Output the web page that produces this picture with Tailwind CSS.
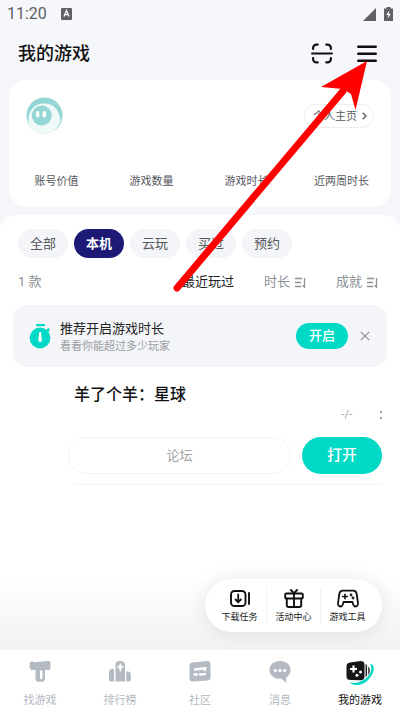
<!DOCTYPE html>
<html lang="zh-CN">
<head>
<meta charset="utf-8">
<meta name="viewport" content="width=device-width, initial-scale=1">
<title>我的游戏</title>
<script src="https://cdn.jsdelivr.net/npm/@tailwindcss/browser@4"></script>
</head>
<body class="relative flex min-h-screen flex-col bg-[#f6f7fa] font-['Roboto','Noto_Sans_CJK_SC',sans-serif] text-[#111]">
  <!-- Status bar -->
  <div class="flex h-7 items-center pl-[7px] pr-[7px] text-[#606164]">
    <span class="text-base leading-7">11:20</span>
    <svg class="ml-[14px]" width="11" height="12" viewBox="0 0 11 12" aria-hidden="true"><rect width="11" height="12" rx="1" fill="#606164"/><path d="M3 8.500 5.500 2.500 8 8.500M4 6.700h3" fill="none" stroke="#fff" stroke-width="1.300"/></svg>
    <svg class="ml-auto" width="13" height="13" viewBox="0 0 13 13" aria-hidden="true"><path d="M13 0v13H0z" fill="#606164"/></svg>
    <svg class="ml-2" width="9" height="14" viewBox="0 0 9 14" aria-hidden="true"><path d="M2.500 0h4v1.500H9V14H0V1.500h2.500z" fill="#606164"/><path d="M5.300 3.500 2.200 8h2l-.6 3.500L6.800 7h-2z" fill="#fff"/></svg>
  </div>

  <!-- Title bar -->
  <header class="flex h-[52px] items-center pl-[18px] pr-[22px]">
    <h1 class="text-lg font-medium">我的游戏</h1>
    <button class="ml-auto" aria-label="扫一扫">
      <svg width="22" height="22" viewBox="0 0 22 22" fill="none" stroke="#111" stroke-width="2.200" stroke-linecap="round"><path d="M1.100 10.500h19.800M2.100 6V5a3.400 3.400 0 0 1 3.400-3.400h1.200M15.300 1.600h1.200A3.400 3.400 0 0 1 19.900 5v1M2.100 15v1a3.400 3.400 0 0 0 3.400 3.400h1.200M15.300 19.400h1.200a3.400 3.400 0 0 0 3.400-3.400v-1"/></svg>
    </button>
    <button class="ml-[23px]" aria-label="菜单">
      <svg width="22" height="18" viewBox="0 0 22 18" fill="none" stroke="#111" stroke-width="2.600" stroke-linecap="round"><path d="M2.300 1.700h17.400M2.300 8.700h17.400M2.300 15.700h17.400"/></svg>
    </button>
  </header>

  <!-- Profile card -->
  <section class="mx-[9px] mb-2 rounded-[18px] bg-white pb-4 pt-[17px]">
    <div class="flex items-center justify-between px-[17px]">
      <svg width="37" height="37" viewBox="0 0 37 37" role="img" aria-label="头像">
        <circle cx="18.500" cy="18.500" r="18" fill="#94d6d6"/>
        <path d="M3.500 29C0 19 5 7.500 17 6.500c10-.5 16.500 6 17.500 17.500C32 32 26 36.500 18.500 36.500 12 36.500 7 33 3.500 29z" fill="#eff9f8"/>
        <circle cx="15.800" cy="18.500" r="10" fill="#94d6d6"/>
        <rect x="10" y="14" width="3.400" height="6.500" rx="1.700" fill="#fff"/><rect x="16.600" y="14" width="3.400" height="6.500" rx="1.700" fill="#fff"/>
      </svg>
      <button class="flex h-6 items-center gap-[5px] rounded-full border border-[#eceef0] pl-2 pr-[6px] text-[11px] leading-4 text-[#55585d]"><span class="pt-[2px]">个人主页</span>
        <svg width="5" height="8" viewBox="0 0 5 8" fill="none" stroke="#55585d" stroke-width="1.300" aria-hidden="true"><path d="M.7.700 4 4 .7 7.300"/></svg>
      </button>
    </div>
    <ul class="mt-[39px] grid grid-cols-4 pr-[2px] text-center text-[11px] leading-[18px] text-[#55585d]">
      <li>账号价值</li><li>游戏数量</li><li>游戏时长</li><li>近两周时长</li>
    </ul>
  </section>

  <!-- Game list -->
  <main class="relative flex flex-1 flex-col rounded-t-[16px] bg-white pt-[14px]">
    <div class="flex gap-[6px] px-[18px] text-[13px] text-[#55585d]">
      <button class="h-[29px] rounded-full bg-[#f4f5f8] px-3">全部</button>
      <button class="h-[29px] rounded-full bg-[#1c1a75] px-3 font-bold text-white">本机</button>
      <button class="h-[29px] rounded-full bg-[#f4f5f8] px-3">云玩</button>
      <button class="h-[29px] rounded-full bg-[#f4f5f8] px-3">买过</button>
      <button class="h-[29px] rounded-full bg-[#f4f5f8] px-3">预约</button>
    </div>

    <div class="mt-[13px] flex h-[22px] items-center pl-[18px] pr-[22px] text-[13px] text-[#8c9097]">
      <span>1 款</span>
      <button class="ml-auto text-[#222]">最近玩过</button>
      <button class="ml-[30px] flex items-center gap-1">时长
        <svg width="12" height="11" viewBox="0 0 12 11" fill="none" stroke="#8c9097" stroke-width="1.300" aria-hidden="true"><path d="M1 1.500h7M1 5.500h6M1 9.500h6M10.500 1v9L8.500 8.200"/></svg>
      </button>
      <button class="ml-[30px] flex items-center gap-1">成就
        <svg width="12" height="11" viewBox="0 0 12 11" fill="none" stroke="#8c9097" stroke-width="1.300" aria-hidden="true"><path d="M1 1.500h7M1 5.500h6M1 9.500h6M10.500 1v9L8.500 8.200"/></svg>
      </button>
    </div>

    <section class="mx-[13px] mt-3 flex h-[62px] items-center rounded-[14px] bg-[#f4f5f8] pl-4 pr-[17px]">
      <svg width="22" height="25" viewBox="0 0 22 25" aria-hidden="true"><rect x="7" y="0" width="9" height="2.200" rx=".6" fill="#00d9c5"/><circle cx="11" cy="14" r="10.400" fill="#00d9c5"/><path d="m16.500 6 3-2 1.300 1.300-1.300 3z" fill="#00d9c5"/><path d="M10.200 8h1.800l.8 7.500a1.800 1.800 0 1 1-3.400 0z" fill="#fff"/></svg>
      <div class="ml-[9px] pt-1">
        <h2 class="text-[13px] leading-[18px] text-[#222]">推荐开启游戏时长</h2>
        <p class="text-[11px] leading-[18px] text-[#9a9ea5]">看看你能超过多少玩家</p>
      </div>
      <button class="ml-auto h-[26px] rounded-full bg-[#00d9c5] px-[13px] text-[13px] font-medium text-white">开启</button>
      <button class="ml-3" aria-label="关闭">
        <svg width="10" height="10" viewBox="0 0 10 10" stroke="#8c9097" stroke-width="1.200"><path d="m.8.800 8.400 8.400M9.200.800.8 9.200"/></svg>
      </button>
    </section>

    <article class="ml-[74px] mr-[18px] border-b border-[#f3f4f5] pb-[10px] pt-4">
      <h2 class="text-base font-medium leading-6">羊了个羊：星球</h2>
      <div class="flex h-4 items-center justify-end text-[11px] text-[#9a9ea5]">
        <span>-/-</span>
        <button class="ml-7 flex flex-col gap-1" aria-label="更多"><span class="size-[2px] bg-[#9a9ea5]"></span><span class="size-[2px] bg-[#9a9ea5]"></span></button>
      </div>
      <div class="-ml-[6px] mt-[14px] flex gap-[11px]">
        <button class="h-[37px] flex-1 rounded-full border border-[#f3f4f5] text-[13px] text-[#a0a3a9]">论坛</button>
        <button class="h-[37px] w-20 rounded-full bg-[#00d9c5] text-[15px] font-medium text-white">打开</button>
      </div>
    </article>

    <div class="mt-auto flex h-[90px] items-start justify-end bg-linear-to-b from-white from-20% to-[#f2f2f2] pr-[18px] pt-[19px]">
      <div class="flex h-[53px] items-center rounded-full bg-white px-2 text-[9px] leading-3 text-[#222] shadow-[0_1px_20px_rgba(0,0,0,0.1)]">
        <button class="flex w-[53px] flex-col items-center gap-[3px]">
          <svg width="22" height="19" viewBox="0 0 22 19" fill="none" stroke="#111" stroke-width="1.900" stroke-linecap="round" aria-hidden="true"><rect x="2" y="2" width="14.500" height="15" rx="3.500"/><path d="M9.200 5.500V13M6.500 10.500l2.700 2.700 2.700-2.700" stroke-width="1.800"/><path d="M20 4v11"/></svg>
          下载任务
        </button>
        <span class="h-9 w-px bg-[#f1f2f3]"></span>
        <button class="flex w-[53px] flex-col items-center gap-[3px]">
          <svg width="20" height="19" viewBox="0 0 20 19" fill="none" stroke="#111" stroke-width="1.900" stroke-linecap="round" stroke-linejoin="round" aria-hidden="true"><rect x="1.200" y="4.500" width="17.600" height="5" rx="1"/><path d="M2.800 9.500v6.800q0 1.700 1.700 1.700h11q1.700 0 1.700-1.700V9.500M10 4.500V18M10 4.300 7 1M10 4.300 13 1"/></svg>
          活动中心
        </button>
        <span class="h-9 w-px bg-[#f1f2f3]"></span>
        <button class="flex w-[53px] flex-col items-center gap-[3px]">
          <svg width="22" height="19" viewBox="0 0 22 19" fill="none" stroke="#111" stroke-width="1.800" stroke-linejoin="round" stroke-linecap="round" aria-hidden="true"><path d="M5.500 1.700h11c2 0 2.800 1.300 3.200 3.300l1.200 8.500c.3 2.500-.8 4-2.400 4-1.500 0-2-1-2.500-2.500L15.500 13h-9L6 15c-.5 1.500-1 2.500-2.500 2.500-1.600 0-2.700-1.500-2.400-4L2.300 5c.4-2 1.200-3.300 3.200-3.300z"/><path d="M8 5.200v4.600M5.700 7.500h4.600" stroke-width="1.600"/><circle cx="14" cy="6" r=".5"/><circle cx="16" cy="9" r=".5"/></svg>
          游戏工具
        </button>
      </div>
    </div>
  </main>

  <!-- Bottom navigation -->
  <nav class="grid h-[62px] grid-cols-5 bg-white pt-2 text-[11px] leading-4 text-[#b4b8bf]">
    <a href="#" class="flex flex-col items-center gap-[9px]">
      <svg width="22" height="26" viewBox="0 0 22 26" aria-hidden="true"><path d="M1 4.500 3 3l2 1.200L19 3c1.800 0 2.500.8 2.500 2.300v4.500c0 1.400-.7 2.200-2 2.200H16v8.500c0 2-1 3.200-3 3.200H9.500c-2 0-3-1-3-3V12H3.500C1.500 12 .5 10.500.5 8.500z" fill="#b4bac1"/><path d="M11 12.500h2.500V20a1.200 1.200 0 0 1-2.500 0z" fill="#fff"/></svg>
      找游戏
    </a>
    <a href="#" class="flex flex-col items-center gap-[9px]">
      <svg width="24" height="26" viewBox="0 0 24 26" fill="#b4bac1" aria-hidden="true"><path d="M1 15c0-2.500 1-4 3.500-4H6v12.500H3.500c-1.800 0-2.500-.8-2.500-2.300zM7.500 7c0-3 1.500-4 4.500-4s5 1 5 4v16.500H7.500zM18.300 13.500h1.500c2.200 0 3 1 3 3v4.800c0 1.500-.8 2.200-2.300 2.200h-2.200z"/><path d="m12.300 5.500.9 2.500 2.300.9-2.300.9-.9 4-.9-4-2.300-.9 2.300-.9z" fill="#fff" stroke="#fff" stroke-width=".7"/></svg>
      排行榜
    </a>
    <a href="#" class="flex flex-col items-center gap-[9px]">
      <svg width="22" height="26" viewBox="0 0 22 26" aria-hidden="true"><path d="M4 4.500 18.500 3c2 0 3 1 3 3v13.500c0 2-1 3-3 3L4 23.500c-2.300 0-3.500-1-3.500-3.200V8c0-2.200 1-3.300 3.500-3.500z" fill="#b4bac1"/><path d="M6 11.500 16.500 10.200l-.7 1.800M5.500 16.500H8M11 16.500l5-.3" fill="none" stroke="#fff" stroke-width="2.300" stroke-linecap="round" stroke-linejoin="round"/></svg>
      社区
    </a>
    <a href="#" class="flex flex-col items-center gap-[9px]">
      <svg width="22" height="26" viewBox="0 0 22 26" aria-hidden="true"><path d="M11 3c6.200 0 10.500 3.700 10.500 9 0 3.500-1.700 6.200-4.500 7.700l.5 5-5.200-3.900C5.500 21.300.5 17.500.5 12 .5 6.700 4.800 3 11 3z" fill="#b4bac1"/><g fill="#fff"><circle cx="6.300" cy="12.500" r="1.600"/><circle cx="11" cy="12.500" r="1.600"/><circle cx="15.700" cy="12.500" r="1.600"/></g></svg>
      消息
    </a>
    <a href="#" class="flex flex-col items-center gap-[9px] text-[#111]" aria-current="page">
      <svg width="30" height="30" viewBox="0 0 30 30" class="-mb-1" aria-hidden="true"><path d="M25 5.500c5.500 1.500 5 8.500-1 15.500-5.500 6.500-14 8-19.500 3.500 4.500 1 8.500.5 12-1.500 8-3.500 12-11 8.500-17.500z" fill="#00d9c5"/><path d="M5 4.500 15.500 3c2.500 0 4 1 4 3.500v12.200c0 2.300-1.200 3.500-3.800 3.500L5.500 22C3 22 1.500 21 1.500 18.500v-10c0-2.500 1-3.700 3.500-4z" fill="#151719"/><path d="M20.600 6q1.400.5 1.400 2v9q0 1.500-1.400 2zM23.300 8.500q1.500 1 1.500 4t-1.500 5z" fill="#151719"/><path d="M8.500 7.500v7M5 11h7" stroke="#fff" stroke-width="2.200"/><circle cx="15.500" cy="14" r="1.500" fill="#fff"/><circle cx="12" cy="17.300" r="1.500" fill="#fff"/></svg>
      我的游戏
    </a>
  </nav>

  <!-- Arrow pointing at the menu button -->
  <svg class="pointer-events-none absolute right-[33px] top-[61px]" width="194" height="232" viewBox="0 0 194 232" aria-hidden="true"><path d="M4 227 170 30" stroke="#f00" stroke-width="7" stroke-linecap="round"/><path d="m194 0-46 26 22 2 8 5 4.500 16z" fill="#f00"/></svg>
</body>
</html>
